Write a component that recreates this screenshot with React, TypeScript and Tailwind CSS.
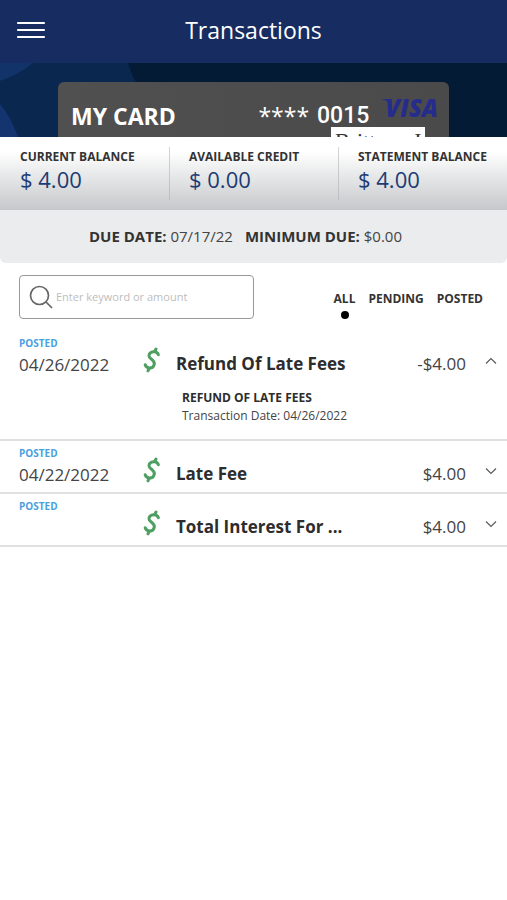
import { useState } from "react"

const font = "font-['Open_Sans',sans-serif]"

const balances = [
  { label: "CURRENT BALANCE", value: "$ 4.00" },
  { label: "AVAILABLE CREDIT", value: "$ 0.00" },
  { label: "STATEMENT BALANCE", value: "$ 4.00" },
]

const filters = ["ALL", "PENDING", "POSTED"]

type Transaction = {
  id: number
  date: string
  title: string
  amount: string
  detail?: string
}

const transactions: Transaction[] = [
  { id: 1, date: "04/26/2022", title: "Refund Of Late Fees", amount: "-$4.00", detail: "REFUND OF LATE FEES" },
  { id: 2, date: "04/22/2022", title: "Late Fee", amount: "$4.00" },
  { id: 3, date: "", title: "Total Interest For ...", amount: "$4.00" },
]

function DollarIcon() {
  return (
    <svg viewBox="0 0 18 26" className="h-[26px] w-[18px]" fill="none" stroke="#4f9f63" strokeWidth="3" strokeLinecap="round" aria-hidden="true">
      <path d="M15.4 7.6C14.4 5.4 12.8 4.6 10.8 4.8C7.8 5.1 6 6.8 6 8.8C6 10.8 7.8 11.6 9.2 12.8C11 14.3 11.8 15.6 11.2 17.6C10.5 20 8.6 21.2 6.4 21C4.2 20.8 2.8 19.8 2.2 17.8" />
      <path d="M12 4L13 2M6 21.6L5 23.8" />
    </svg>
  )
}

function Chevron({ open }: { open: boolean }) {
  return (
    <svg viewBox="0 0 12 8" className="h-2 w-3" fill="none" stroke="#555" strokeWidth="1.1" aria-hidden="true">
      <path d={open ? "M1 6.5L6 1.5L11 6.5" : "M1 1.5L6 6.5L11 1.5"} />
    </svg>
  )
}

function TransactionRow({ item }: { item: Transaction }) {
  const [open, setOpen] = useState(Boolean(item.detail))
  return (
    <li className="border-b-2 border-[#e0e0e0]">
      <button
        type="button"
        aria-expanded={open}
        onClick={() => setOpen(!open)}
        className="flex h-[51px] w-full items-start pl-[19px] pr-[10px] text-left text-[17px] leading-6 text-[#444]"
      >
        <span className="w-[124px] shrink-0 pt-1">
          <span className="block text-[10px] font-bold leading-4 text-[#4a9fe0]">POSTED</span>
          <span className="block pt-[2px]">{item.date}</span>
        </span>
        <span className="w-[33px] shrink-0 pt-4">
          <DollarIcon />
        </span>
        <span className="flex-1 truncate pt-[21px] font-bold text-[#2d2d2d]">{item.title}</span>
        <span className="pt-[21px]">{item.amount}</span>
        <span className="ml-[19px] pt-[26px]">
          <Chevron open={open} />
        </span>
      </button>
      {open && item.detail && (
        <div className="pb-[14px] pl-[182px] pt-[7px] text-xs leading-[18px] text-[#444]">
          <p className="font-bold text-[#2d2d2d]">{item.detail}</p>
          <p>Transaction Date: {item.date}</p>
        </div>
      )}
    </li>
  )
}

function VisaLogo() {
  return (
    <span className="relative text-[#262c8c]">
      <svg viewBox="0 0 10 5" className="absolute left-0 top-[5px] h-[5px] w-[10px]" fill="currentColor" aria-hidden="true">
        <path d="M0 0H7L10 5C7 2 4 1 0 0Z" />
      </svg>
      <span className="block pl-1 text-2xl font-extrabold italic leading-7">VISA</span>
    </span>
  )
}

function CardBanner() {
  return (
    <section className="relative overflow-hidden bg-[#041b36] px-[58px] pt-[19px]">
      <svg viewBox="0 0 140 74" className="absolute left-0 top-0 h-[74px] w-[140px]" aria-hidden="true">
        <path d="M0 0H128Q131 12 138 22V74H0Z" fill="#0a284f" />
        <path d="M0 0H33Q18 12 0 18Z" fill="#12326a" />
        <path d="M0 41Q11 54 18 74H0Z" fill="#143470" />
      </svg>
      <div className="relative flex h-[55px] items-start overflow-hidden rounded-t-md bg-linear-to-r from-[#505050] to-[#4a4a4a] pl-[13px] pr-[11px] text-white">
        <h2 className="flex-1 pt-[18px] text-[23px] font-bold leading-8">MY CARD</h2>
        <p className="flex gap-2 pt-[18px] text-[23px] leading-8">
          <span>****</span>
          <span className="font-['Roboto',sans-serif] font-medium">0015</span>
        </p>
        <div className="ml-3 pt-3">
          <VisaLogo />
        </div>
        <div className="absolute right-[24px] top-[45px] h-7 w-[94px] bg-white text-center font-['Liberation_Serif',serif] text-[22px] leading-7 text-[#333]">
          Brittney J
        </div>
      </div>
    </section>
  )
}

export default function App() {
  const [filter, setFilter] = useState("ALL")
  return (
    <div className={`min-h-screen bg-white text-[#333] ${font}`}>
      <header className="grid h-[63px] grid-cols-[1fr_auto_1fr] items-center bg-[#172c60] px-4 pb-1 text-white">
        <button type="button" aria-label="Menu" className="w-[30px]">
          <svg viewBox="0 0 30 20" className="h-5 w-[30px]" stroke="currentColor" strokeWidth="2.2" strokeLinecap="round" aria-hidden="true">
            <path d="M2 3H28M2 10H28M2 17H28" />
          </svg>
        </button>
        <h1 className="text-[23px] leading-8">Transactions</h1>
      </header>

      <CardBanner />

      <section className="grid h-[73px] grid-cols-3 bg-linear-to-b from-white from-20% to-[#c5c8ca]">
        {balances.map((b, i) => (
          <div key={b.label} className="flex py-[10px]">
            {i > 0 && <span className="-mr-px w-px bg-linear-to-b from-[#d5d5d5] to-[#bbbdc0]" />}
            <div className="pl-5">
              <p className="whitespace-nowrap text-xs font-bold leading-5">{b.label}</p>
              <p className="text-[22px] leading-6 text-[#1d3c74]">{b.value}</p>
            </div>
          </div>
        ))}
      </section>

      <section className="flex h-[53px] items-center justify-center gap-3 rounded-b-md bg-[#ebecee] pr-4 text-[15px] text-[#444]">
        <p><b className="text-[#333]">DUE DATE:</b> 07/17/22</p>
        <p><b className="text-[#333]">MINIMUM DUE:</b> $0.00</p>
      </section>

      <div className="flex items-start justify-between pl-[19px] pr-6 pt-3">
        <label className="flex h-11 w-[235px] items-center rounded border border-[#999] pl-[9px]">
          <svg viewBox="0 0 24 24" className="size-6 shrink-0" fill="none" stroke="#666" strokeWidth="1.7" aria-label="Search">
            <circle cx="10.5" cy="10.5" r="9" />
            <path d="M17 17L23 23" />
          </svg>
          <input type="text" placeholder="Enter keyword or amount" className="w-full min-w-0 bg-transparent pl-[3px] text-[11px] outline-none placeholder:text-[#bdbdbd]" />
        </label>
        <div className="flex gap-[13px] pt-[14px]">
          {filters.map((name) => (
            <button key={name} type="button" aria-pressed={filter === name} onClick={() => setFilter(name)} className="flex flex-col items-center gap-[2px] text-xs font-bold leading-5">
              {name}
              {filter === name && <span className="size-2 rounded-full bg-black" />}
            </button>
          ))}
        </div>
      </div>

      <ul className="pt-3">
        {transactions.map((item) => (
          <TransactionRow key={item.id} item={item} />
        ))}
      </ul>
    </div>
  )
}
